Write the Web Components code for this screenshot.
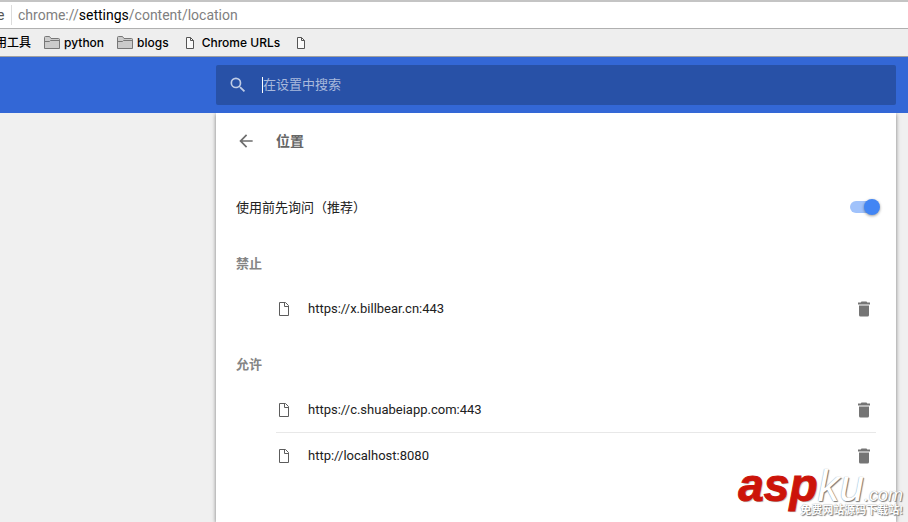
<!DOCTYPE html>
<html lang="zh-CN">
<head>
<meta charset="utf-8">
<meta name="viewport" content="width=device-width, initial-scale=1">
<title>设置 - 位置</title>
<style>
html,body{height:100%}
body{margin:0;overflow:hidden;background:#f0f0f0;font-family:Roboto,"Noto Sans CJK SC",sans-serif;font-size:13px;color:#212121}
</style>
</head>
<body>
<settings-window></settings-window>

<script>
/* ============ ICONS ============ */
var ICONS = {
  search: '<svg width="20" height="20" viewBox="0 0 24 24" fill="currentColor"><path d="M15.5 14h-.79l-.28-.27A6.47 6.47 0 0 0 16 9.5 6.5 6.5 0 1 0 9.5 16c1.61 0 3.09-.59 4.23-1.57l.27.28v.79l5 4.99L20.49 19l-4.99-5zm-6 0a4.5 4.5 0 1 1 0-9 4.5 4.5 0 0 1 0 9z"/></svg>',
  back: '<svg width="20" height="20" viewBox="0 0 24 24" fill="currentColor"><path d="M20 11H7.83l5.59-5.59L12 4l-8 8 8 8 1.41-1.41L7.83 13H20v-2z"/></svg>',
  trash: '<svg width="20" height="20" viewBox="0 0 20 20" fill="currentColor"><path d="M5 6.5h10V16a1.5 1.5 0 0 1-1.5 1.5h-7A1.5 1.5 0 0 1 5 16zM7.5 2.5h5l.8 1H16v2H4v-2h2.700z"/></svg>',
  file: '<svg width="16" height="16" viewBox="0 0 16 16" fill="none" stroke="#5c5c5c"><path d="M3.5 1.5h6l3 3v10h-9z" fill="#fff"/><path d="M8.5 1.5v4h4"/></svg>',
  page: '<svg width="16" height="16" viewBox="0 0 16 16" fill="none" stroke="#555"><path d="M4.5 2.5h4l3 3v8h-7z" fill="#fafafa"/><path d="M8.500 2.5v3h3"/></svg>',
  folder: '<svg width="16" height="16" viewBox="0 0 16 16" fill="#cbcbcb" stroke="#777"><path d="M.5 13.5v-11q0-1 1-1h4l1.500 2h7.500q1 0 1 1v9z"/><path d="M.5 6.500h5l1-1h9"/></svg>'
};

function mount(el, html) {
  if (el.shadowRoot) return;
  el.attachShadow({ mode: 'open' }).innerHTML = html;
}

/* ============ ADDRESS BAR ============ */
class AddressBar extends HTMLElement {
  connectedCallback() {
    mount(this, `<style>
:host{display:flex;align-items:center;box-sizing:border-box;height:29px;overflow:hidden;border-top:2px solid #c4c4c4;border-bottom:1px solid #b0b0b0;background:#fff;font-size:14px;line-height:20px}
.chip{flex:none;width:11px;text-indent:-3px;color:#555}
.sep{flex:none;width:1px;height:20px;background:#dcdcdc;margin-right:6px}
.url{flex:1;color:#808080;white-space:nowrap;outline:none}
b{font-weight:400;color:#000}
</style>
<span class="chip">e</span><span class="sep"></span>
<div class="url" role="textbox" aria-label="地址" contenteditable="true" spellcheck="false">chrome://<b>settings</b>/content/location</div>`);
  }
}
customElements.define('address-bar', AddressBar);

/* ============ BOOKMARKS ============ */
class BookmarkItem extends HTMLElement {
  connectedCallback() {
    mount(this, `<style>
:host{display:block;flex:none}
a{display:flex;align-items:center;gap:4px;color:#000;text-decoration:none}
svg{display:block}
</style>
<a href="#" aria-label="${this.getAttribute('label') || ''}">${ICONS[this.getAttribute('icon')] || ''}<slot></slot></a>`);
  }
}
customElements.define('bookmark-item', BookmarkItem);

class BookmarkBar extends HTMLElement {
  connectedCallback() {
    mount(this, `<style>
:host{display:flex;align-items:center;gap:13px;box-sizing:border-box;height:28px;overflow:hidden;border-bottom:1px solid #a0a0a0;background:#eee;font:500 12px/16px Inter,"Noto Sans CJK SC",sans-serif}
.cut{margin-left:-5px}
</style>
<bookmark-item class="cut" label="常用工具">用工具</bookmark-item>
<bookmark-item icon="folder" label="python">python</bookmark-item>
<bookmark-item icon="folder" label="blogs">blogs</bookmark-item>
<bookmark-item icon="page" label="Chrome URLs">Chrome URLs</bookmark-item>
<bookmark-item icon="page" label="书签"></bookmark-item>`);
  }
}
customElements.define('bookmark-bar', BookmarkBar);

/* ============ SEARCH TOOLBAR ============ */
class SettingsToolbar extends HTMLElement {
  connectedCallback() {
    mount(this, `<style>
:host{display:block;padding:8px 12px 8px 216px;background:#3367d6}
label{display:flex;align-items:center;box-sizing:border-box;height:40px;padding:0 12px;border-radius:2px;background:#2851a7;color:#bfcce6}
svg{display:block;flex:none}
.caret{flex:none;width:1px;height:16px;margin-left:14px;background:#fff}
input{flex:1;min-width:0;height:24px;padding:0 0 2px;box-sizing:border-box;border:0;outline:0;background:none;color:#fff;caret-color:#fff;font:inherit}
input::placeholder{color:#a9b9dc;opacity:1}
</style>
<label>${ICONS.search}<span class="caret"></span><input type="text" placeholder="在设置中搜索" aria-label="在设置中搜索"></label>`);
  }
}
customElements.define('settings-toolbar', SettingsToolbar);

/* ============ SETTINGS CARD ============ */
class ToggleRow extends HTMLElement {
  connectedCallback() {
    mount(this, `<style>
:host{display:block;padding:0 16px 0 20px}
label{display:flex;align-items:center;justify-content:space-between;height:76px}
.text{padding-bottom:2px}
input{appearance:none;position:relative;flex:none;width:28px;height:12px;margin:0 2px;border-radius:6px;background:#bdbdbd}
input::before{content:"";position:absolute;top:-2px;left:-2px;width:16px;height:16px;border-radius:50%;background:#fafafa;box-shadow:0 1px 3px rgba(0,0,0,.4)}
input:checked{background:#a0c2fb}
input:checked::before{left:14px;background:#4285f4}
</style>
<label><span class="text"><slot></slot></span><input type="checkbox" checked></label>`);
  }
}
customElements.define('toggle-row', ToggleRow);

class SiteRow extends HTMLElement {
  connectedCallback() {
    mount(this, `<style>
:host{display:flex;align-items:center;box-sizing:border-box;height:46px;padding-top:2px}
:host(:not(:first-of-type)){padding-top:1px;border-top:1px solid #e8e8e8}
svg{display:block;flex:none}
.name{flex:1;margin-left:16px;padding-bottom:2px}
button{flex:none;padding:0;margin-right:2px;border:0;background:none;color:#757575}
</style>
${ICONS.file}<span class="name"><slot></slot></span><button type="button" aria-label="删除">${ICONS.trash}</button>`);
  }
}
customElements.define('site-row', SiteRow);

class SiteList extends HTMLElement {
  connectedCallback() {
    mount(this, `<style>
:host{display:block;padding:0 20px}
h2{margin:0;padding-top:1px;font-size:13px;font-weight:600;line-height:36px;color:#858585}
.rows{padding:3px 0 15px 40px}
</style>
<h2>${this.getAttribute('heading')}</h2>
<div class="rows"><slot></slot></div>`);
  }
}
customElements.define('site-list', SiteList);

class SettingsCard extends HTMLElement {
  connectedCallback() {
    mount(this, `<style>
:host{display:block;background:#fff;box-shadow:0 1px 4px rgba(0,0,0,.5)}
header{display:flex;align-items:center;gap:20px;height:56px;padding:0 20px}
button{padding:0;border:0;background:none;color:#6e6e6e}
svg{display:block}
h1{margin:0;padding-bottom:2px;font-size:14px;font-weight:600;color:#666}
</style>
<header><button type="button" aria-label="返回">${ICONS.back}</button><h1>${this.getAttribute('heading')}</h1></header>
<slot></slot>`);
  }
}
customElements.define('settings-card', SettingsCard);

/* ============ WATERMARK ============ */
class SiteMark extends HTMLElement {
  connectedCallback() {
    mount(this, `<style>
:host{position:absolute;right:5px;bottom:4px;font-family:"Liberation Sans","Noto Sans CJK SC",sans-serif;color:#fff;text-align:right;pointer-events:none}
.logo{display:flex;align-items:baseline;justify-content:flex-end;margin-bottom:-13px;font-style:italic;font-size:44px;line-height:40px}
.asp{font-size:46px;font-weight:700;color:#cc1409;-webkit-text-stroke:1px #cc1409;text-shadow:1px 1px 1px #aaa}
.ku,.com,.sub{text-shadow:1px 1px 1px #777,0 0 1px #888}
.com{font-size:18px}
.sub{position:relative;font-size:11px;line-height:16px;font-weight:700}
</style>
<div class="logo"><span class="asp">asp</span><span class="ku">ku</span><span class="com">.com</span></div>
<div class="sub">免费网站源码下载站!</div>`);
  }
}
customElements.define('site-mark', SiteMark);

/* ============ WINDOW ============ */
class SettingsWindow extends HTMLElement {
  connectedCallback() {
    mount(this, `<style>
:host{position:relative;display:flex;flex-direction:column;height:100vh;overflow:hidden}
address-bar,bookmark-bar,settings-toolbar{flex:none;z-index:1}
settings-toolbar{position:relative}
main{flex:1;display:flex;padding:0 12px 0 216px}
settings-card{flex:1}
</style>
<address-bar></address-bar>
<bookmark-bar></bookmark-bar>
<settings-toolbar></settings-toolbar>
<main>
  <settings-card heading="位置">
    <toggle-row>使用前先询问（推荐）</toggle-row>
    <site-list heading="禁止">
      <site-row>https://x.billbear.cn:443</site-row>
    </site-list>
    <site-list heading="允许">
      <site-row>https://c.shuabeiapp.com:443</site-row>
      <site-row>http://localhost:8080</site-row>
    </site-list>
  </settings-card>
</main>
<site-mark></site-mark>`);
  }
}
customElements.define('settings-window', SettingsWindow);
</script>
</body>
</html>
